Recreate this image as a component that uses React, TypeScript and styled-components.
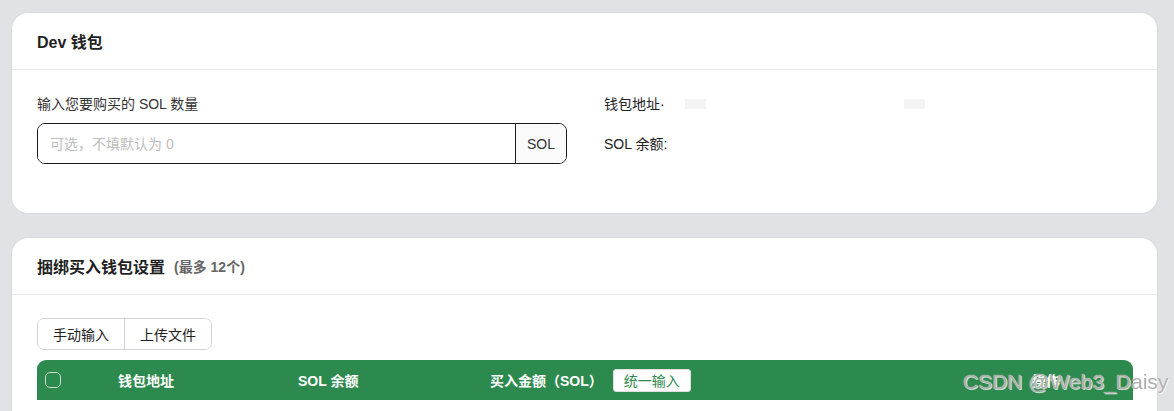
import React from 'react';
import styled, { createGlobalStyle } from 'styled-components';

const GlobalStyle = createGlobalStyle`
  html, body {
    margin: 0;
    padding: 0;
    background: #e1e2e6;
    font-family: "Liberation Sans", "Noto Sans CJK SC", sans-serif;
    color: #222;
    overflow: hidden;
  }
`;

const Page = styled.div`
  position: relative;
  display: flex;
  flex-direction: column;
  gap: 25px;
  padding: 13px 17px 0 12px;
  height: 411px;
  box-sizing: border-box;
`;

const Card = styled.section<{ $minHeight?: number }>`
  background: #fff;
  border-radius: 16px;
  box-shadow: 0 0 0 1px rgba(0, 0, 0, 0.03);
  min-height: ${(p) => (p.$minHeight ? `${p.$minHeight}px` : 'auto')};
  flex-shrink: 0;
`;

const CardHeader = styled.div`
  height: 56px;
  display: flex;
  align-items: center;
  padding: 0 25px;
  border-bottom: 1px solid #ececec;
  gap: 9px;
`;

const CardTitle = styled.h2`
  margin: 0;
  font-size: 16px;
  font-weight: 700;
  color: #1f1f1f;
`;

const CardHint = styled.span`
  font-size: 14px;
  font-weight: 700;
  color: #666;
`;

const CardBody = styled.div<{ $pad: string }>`
  padding: ${(p) => p.$pad};
`;

const TwoCols = styled.div`
  display: grid;
  grid-template-columns: 530px 1fr;
  column-gap: 37px;
`;

const Field = styled.div`
  display: flex;
  flex-direction: column;
  gap: 10px;
`;

const Label = styled.label`
  font-size: 14px;
  color: #333;
  line-height: 18px;
`;

const InputGroup = styled.div`
  display: flex;
  height: 41px;
  border: 1px solid #1a1a1a;
  border-radius: 8px;
  overflow: hidden;
  box-sizing: border-box;
  flex-shrink: 0;
`;

const TextInput = styled.input`
  flex: 1;
  border: none;
  outline: none;
  padding: 0 12px;
  font-family: inherit;
  font-size: 14px;
  color: #333;
  background: #fff;

  &::placeholder {
    color: #bdbdbd;
  }
`;

const Addon = styled.span`
  width: 50px;
  display: flex;
  align-items: center;
  justify-content: center;
  border-left: 1px solid #1a1a1a;
  background: #fafafa;
  font-size: 14px;
  color: #333;
`;

const InfoList = styled.div`
  display: flex;
  flex-direction: column;
  gap: 22px;
`;

const InfoRow = styled.div`
  display: flex;
  align-items: center;
  font-size: 14px;
  color: #222;
  line-height: 18px;
`;

const Redacted = styled.span<{ $left: number }>`
  display: inline-block;
  width: 21px;
  height: 10px;
  margin-left: ${(p) => p.$left}px;
  background: #f4f4f4;
`;

const Segmented = styled.div`
  display: inline-flex;
  border: 1px solid #d4d4d4;
  border-radius: 7px;
  overflow: hidden;
  margin-bottom: 10px;
`;

const SegButton = styled.button`
  height: 30px;
  padding: 0 15px;
  border: none;
  background: #fff;
  font-family: inherit;
  font-size: 14px;
  color: #222;
  cursor: pointer;

  & + & {
    border-left: 1px solid #d4d4d4;
  }
`;

const TableHead = styled.div`
  display: grid;
  grid-template-columns: 73px 180px 192px 1fr 101px;
  align-items: center;
  height: 40px;
  padding-left: 8px;
  background: #2d8a4e;
  border-radius: 9px 9px 0 0;
  color: #fff;
  font-size: 14px;
  font-weight: 700;
`;

const Check = styled.span`
  width: 16px;
  height: 16px;
  border: 1px solid #cfd8d2;
  border-radius: 5px;
  box-sizing: border-box;
`;

const HeadCell = styled.div<{ $gap?: number }>`
  display: flex;
  align-items: center;
  gap: ${(p) => p.$gap ?? 0}px;
`;

const SmallButton = styled.button`
  height: 23px;
  width: 78px;
  border: 1px solid #e0e0e0;
  border-radius: 3px;
  background: #fff;
  color: #2d8a4e;
  font-family: inherit;
  font-size: 14px;
  cursor: pointer;
  padding: 0;
`;

const Watermark = styled.div`
  position: absolute;
  left: 963px;
  top: 370px;
  font-size: 21px;
  font-family: "Liberation Sans", sans-serif;
  color: rgba(160, 160, 160, 0.85);
  text-shadow: 0 0 1px #fff, 1px 1px 0 rgba(255, 255, 255, 0.7);
  pointer-events: none;
  white-space: nowrap;
`;

export default function App() {
  return (
    <>
      <GlobalStyle />
      <Page>
        <Card>
          <CardHeader>
            <CardTitle>Dev 钱包</CardTitle>
          </CardHeader>
          <CardBody $pad="25px 25px 49px">
            <TwoCols>
              <Field>
                <Label>输入您要购买的 SOL 数量</Label>
                <InputGroup>
                  <TextInput placeholder="可选，不填默认为 0" />
                  <Addon>SOL</Addon>
                </InputGroup>
              </Field>
              <InfoList>
                <InfoRow>
                  钱包地址·
                  <Redacted $left={20} />
                  <Redacted $left={198} />
                </InfoRow>
                <InfoRow>SOL 余额:</InfoRow>
              </InfoList>
            </TwoCols>
          </CardBody>
        </Card>
        <Card $minHeight={260}>
          <CardHeader>
            <CardTitle>捆绑买入钱包设置</CardTitle>
            <CardHint>(最多 12个)</CardHint>
          </CardHeader>
          <CardBody $pad="23px 24px 0 25px">
            <Segmented>
              <SegButton>手动输入</SegButton>
              <SegButton>上传文件</SegButton>
            </Segmented>
            <TableHead>
              <Check />
              <HeadCell>钱包地址</HeadCell>
              <HeadCell>SOL 余额</HeadCell>
              <HeadCell $gap={10}>
                买入金额（SOL）
                <SmallButton>统一输入</SmallButton>
              </HeadCell>
              <HeadCell>操作</HeadCell>
            </TableHead>
          </CardBody>
        </Card>
        <Watermark>CSDN @Web3_Daisy</Watermark>
      </Page>
    </>
  );
}
